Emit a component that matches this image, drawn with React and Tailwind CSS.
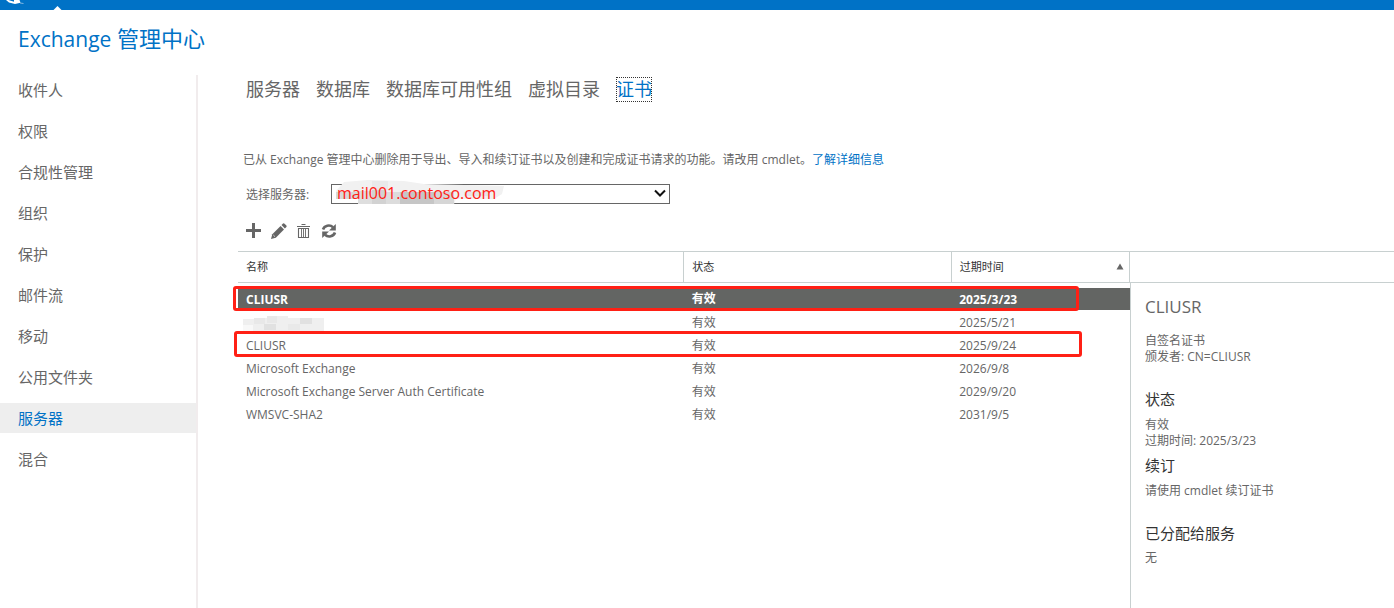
import React, { useState } from 'react';

const navItems = ['收件人', '权限', '合规性管理', '组织', '保护', '邮件流', '移动', '公用文件夹', '服务器', '混合'];

const tabs = ['服务器', '数据库', '数据库可用性组', '虚拟目录', '证书'];

const certificates = [
  { id: 1, name: 'CLIUSR', status: '有效', expires: '2025/3/23' },
  { id: 2, name: '', status: '有效', expires: '2025/5/21' },
  { id: 3, name: 'CLIUSR', status: '有效', expires: '2025/9/24' },
  { id: 4, name: 'Microsoft Exchange', status: '有效', expires: '2026/9/8' },
  { id: 5, name: 'Microsoft Exchange Server Auth Certificate', status: '有效', expires: '2029/9/20' },
  { id: 6, name: 'WMSVC-SHA2', status: '有效', expires: '2031/9/5' },
];

const TopBar = () => (
  <header className="h-[10px] bg-[#0072c6]">
    <svg className="block" width="70" height="10" viewBox="0 0 70 10">
      <path d="M6 0 L19.500 0 L20.500 2.800 L15 3.900 L9 2.500 Z" fill="#fff" />
      <path d="M8.500 0 L14 0 L14 1.800 Z" fill="#0072c6" />
      <path d="M20 3 L23.500 3.500" stroke="#7db5e0" />
      <path d="M53.500 10 L57.500 6 L61.500 10 Z" fill="#fff" />
    </svg>
  </header>
);

const Sidebar = () => (
  <nav className="w-[198px] shrink-0 border-r-2 border-[#f1eced]">
    <ul className="flex flex-col gap-[11px]">
      {navItems.map((item) => (
        <li key={item}>
          <a
            href="#"
            className={
              item === '服务器'
                ? 'block h-[30px] bg-[#eeeeee] pl-[18px] text-[15px] leading-[30px] text-[#0072c6]'
                : 'block h-[30px] pl-[18px] text-[15px] leading-[30px] text-[#666666]'
            }
          >
            {item}
          </a>
        </li>
      ))}
    </ul>
  </nav>
);

const Tabs = () => (
  <div className="flex gap-4 pl-2 text-[18px] leading-[25px]">
    {tabs.map((tab) => (
      <a
        key={tab}
        href="#"
        className={tab === '证书' ? 'text-[#0072c6] outline-1 -outline-offset-1 outline-dotted outline-[#333333]' : 'text-[#666666]'}
      >
        {tab}
      </a>
    ))}
  </div>
);

const ServerPicker = () => (
  <div className="flex items-center pl-2">
    <label htmlFor="server" className="w-[85px] pt-px">
      选择服务器:
    </label>
    <div className="relative h-5 w-[339px] border border-[#666666] bg-white">
      <svg className="absolute -top-[6px] left-0" width="180" height="28" viewBox="0 0 180 28">
        <path d="M4 12 L12 3 L36 1 L72 2 L92 5 L172 7 L170 15 L162 20 L124 20 L122 25 L26 25 L26 20 L4 20 Z" fill="#f1f1f1" />
        <path d="M4 13h22v7H4z" fill="#d8d8d8" />
        <path d="M26 12h14v13H26z" fill="#dedede" />
        <path d="M40 2h16v9H40z" fill="#e9e9e9" />
        <path d="M40 11h14v14H40z" fill="#d2d2d2" />
        <path d="M54 13h14v12H54z" fill="#dcdcdc" />
        <path d="M68 13h34v12H68z" fill="#c6c6c6" />
        <path d="M102 13h20v12h-20z" fill="#d6d6d6" />
        <path d="M132 13h24v4h-24z" fill="#e6e6e6" />
      </svg>
      <select id="server" className="relative block h-[18px] w-full appearance-none bg-transparent pb-px pl-[5px] text-[16px] leading-[17px] text-[#ff2015]">
        <option>mail001.contoso.com</option>
      </select>
      <svg className="pointer-events-none absolute top-[4px] right-[3px]" width="12" height="9" viewBox="0 0 12 9">
        <path d="M1 1.500 L6 6.500 L11 1.500" fill="none" stroke="#111" strokeWidth="2" />
      </svg>
    </div>
  </div>
);

const Toolbar = () => (
  <div className="flex h-4 items-center gap-[9px] pl-2 text-[#666666]">
    <button type="button" aria-label="新建">
      <svg className="block" width="16" height="16" viewBox="0 0 16 16">
        <path d="M6 0h3v6h6v3H9v6H6V9H0V6h6z" fill="currentColor" />
      </svg>
    </button>
    <button type="button" aria-label="编辑">
      <svg className="block" width="16" height="16" viewBox="0 0 16 16" fill="currentColor">
        <path d="M0 16 L1.300 11.200 L9.600 3 L13 6.400 L4.800 14.700 Z" />
        <path d="M10.500 2.100 L12 0.600 Q12.700 0 13.500 0.700 L15.400 2.600 Q16 3.300 15.400 4 L13.900 5.500 Z" />
        <path d="M2.300 12 L4 13.700" stroke="#fff" strokeWidth="0.700" />
      </svg>
    </button>
    <button type="button" aria-label="删除">
      <svg className="block" width="16" height="16" viewBox="0 0 16 16" fill="none" stroke="currentColor">
        <path d="M1 3.500h13M5.500 1.500h4" strokeWidth="1" />
        <path d="M2.500 5.500h10v9h-10z" strokeWidth="1.100" />
        <path d="M5.500 5v10M7.500 5v10M9.500 5v10" strokeWidth="0.900" />
      </svg>
    </button>
    <button type="button" aria-label="刷新">
      <svg className="block" width="16" height="16" viewBox="0 0 16 16">
        <path d="M2 6.500 A6 5.500 0 0 1 12 4.200" fill="none" stroke="currentColor" strokeWidth="2.600" />
        <path d="M14.800 1 V7.500 H8 Z" fill="currentColor" />
        <path d="M14 9.500 A6 5.500 0 0 1 4 11.800" fill="none" stroke="currentColor" strokeWidth="2.600" />
        <path d="M1.200 15 V8.500 H8 Z" fill="currentColor" />
      </svg>
    </button>
  </div>
);

const HiddenName = () => (
  <svg className="-ml-[3px] block" width="82" height="15" viewBox="0 0 82 15">
    <path d="M0 3h11V2h13V0h21v2h36v13H0z" fill="#efefef" />
    <path d="M11 2h11v6H11zM24 0h10v7H24z" fill="#e8e8e8" />
    <path d="M0 9h10v6H0z" fill="#f8f8f8" />
    <path d="M21 8h12v6H21zM57 2h12v6H57z" fill="#e1e1e1" />
    <path d="M45 8h12v6H45z" fill="#e9e9e9" />
  </svg>
);

const CertificateTable = ({ selected, onSelect }) => (
  <div className="relative">
    <table className="w-full table-fixed border-collapse text-left">
      <colgroup>
        <col className="w-[50%]" />
        <col className="w-[30%]" />
        <col className="w-[20%]" />
      </colgroup>
      <thead>
        <tr className="h-[31px] border-y border-[#c8d0d0] text-[11px] text-[#333333]">
          <th className="border-r border-[#c8d0d0] p-0 pb-px pl-2 font-normal">名称</th>
          <th className="border-r border-[#c8d0d0] p-0 pb-px pl-2 font-normal">状态</th>
          <th className="border-r border-[#c8d0d0] p-0 pb-px pl-2 font-normal">
            <div className="flex items-center justify-between pr-[5px]">
              过期时间
              <svg width="8" height="7" viewBox="0 0 8 7">
                <path d="M4 0.500 L7.500 6.500 H0.500 Z" fill="#666" />
              </svg>
            </div>
          </th>
        </tr>
      </thead>
      <tbody>
        <tr className="h-[5px]">
          <td colSpan={3} className="p-0" />
        </tr>
        {certificates.map((cert) => (
          <tr
            key={cert.id}
            onClick={() => onSelect(cert.id)}
            className={
              cert.id === selected
                ? 'h-[23px] border-b border-white bg-[#636563] font-bold text-white'
                : 'h-[23px] border-b border-white'
            }
          >
            <td className="p-0 pt-[2px] pl-2">{cert.name || <HiddenName />}</td>
            <td className="p-0 pt-px pl-2">{cert.status}</td>
            <td className="p-0 pt-[2px] pl-2">{cert.expires}</td>
          </tr>
        ))}
      </tbody>
    </table>
    {/* highlight frames around the two CLIUSR rows */}
    <div className="pointer-events-none absolute top-[35px] right-[51px] -left-[5px] h-[25px] rounded-[3px] border-3 border-[#ff2015]" />
    <div className="pointer-events-none absolute top-[80px] right-[48px] -left-[4px] h-[26px] rounded-[3px] border-3 border-[#ff2015]" />
  </div>
);

const Details = () => (
  <aside className="flex w-[264px] shrink-0 flex-col">
    <div className="h-8 border-y border-[#c8d0d0]" />
    <div className="flex-1 border-l border-[#c8d0d0] pt-3 pl-[14px]">
      <h2 className="text-[17px] leading-6">CLIUSR</h2>
      <p className="mt-[14px]">
        自签名证书
        <br />
        颁发者: CN=CLIUSR
      </p>
      <h3 className="mt-6 text-[15px] leading-5 text-[#333333]">状态</h3>
      <p className="mt-2">
        有效
        <br />
        过期时间: 2025/3/23
      </p>
      <h3 className="mt-[6px] text-[15px] leading-5 text-[#333333]">续订</h3>
      <p className="mt-2">请使用 cmdlet 续订证书</p>
      <h3 className="mt-6 text-[15px] leading-5 text-[#333333]">已分配给服务</h3>
      <p className="mt-[7px]">无</p>
    </div>
  </aside>
);

const App = () => {
  const [selected, setSelected] = useState(1);

  return (
    <div className="flex min-h-screen flex-col bg-white font-['Open_Sans','Noto_Sans_CJK_SC',sans-serif] text-[12px] leading-4 text-[#666666]">
      <TopBar />
      <h1 className="h-[65px] pt-[13px] pl-[18px] text-[22px] leading-[30px] text-[#0072c6]">
        <span className="text-[21px]">Exchange</span> 管理中心
      </h1>
      <div className="flex flex-1">
        <Sidebar />
        <main className="flex min-w-0 flex-1 flex-col pt-[2px] pl-10">
          <Tabs />
          <p className="mt-[50px] pl-[5px]">
            已从 Exchange 管理中心删除用于导出、导入和续订证书以及创建和完成证书请求的功能。请改用 cmdlet。
            <a href="#" className="text-[#0072c6]">
              了解详细信息
            </a>
          </p>
          <div className="mt-4">
            <ServerPicker />
          </div>
          <div className="mt-[19px]">
            <Toolbar />
          </div>
          <div className="mt-3 flex flex-1">
            <div className="min-w-0 flex-1">
              <CertificateTable selected={selected} onSelect={setSelected} />
            </div>
            <Details />
          </div>
        </main>
      </div>
    </div>
  );
};

export default App;
